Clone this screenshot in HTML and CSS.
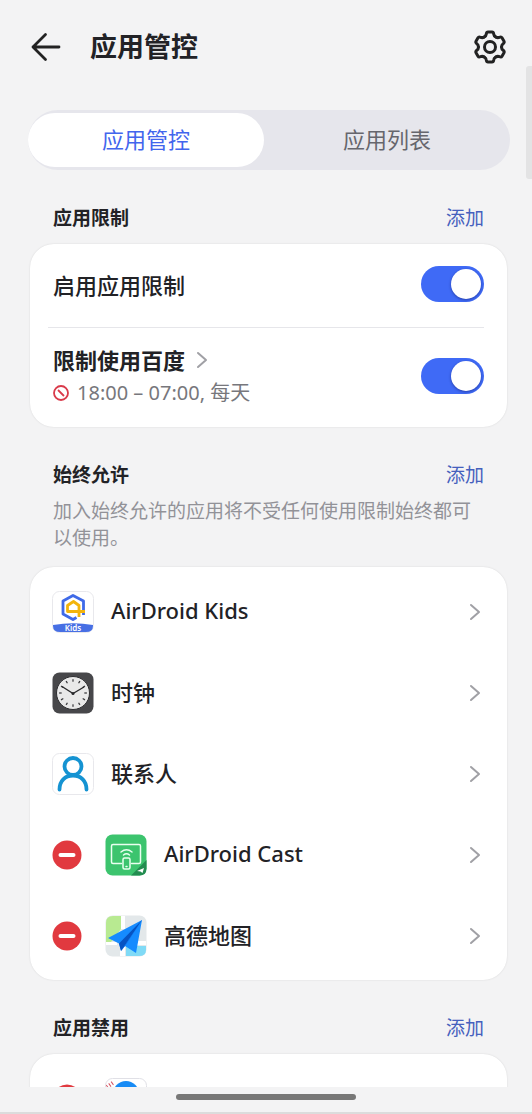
FILE: index.html
```html
<!DOCTYPE html>
<html lang="zh-CN">
<head>
    <meta charset="UTF-8">
    <meta name="viewport" content="width=device-width, initial-scale=1.0">
    <title>应用管控</title>
    <link rel="stylesheet" href="styles.css">
</head>
<body>
    <!-- Shared icons -->
    <svg class="defs" aria-hidden="true">
        <symbol id="chevron" viewBox="0 0 12 18">
            <path d="M2 2l8 7-8 7" fill="none" stroke="currentColor" stroke-width="2" stroke-linecap="round" stroke-linejoin="round"/>
        </symbol>
        <symbol id="minus" viewBox="0 0 30 30">
            <circle cx="15" cy="15" r="14.5" fill="#e1393f"/>
            <path d="M8.5 15h13" stroke="#fff" stroke-width="4" stroke-linecap="round"/>
        </symbol>
        <path id="tooth" d="M-5.8-10Q-3.9-11.1-3.7-13Q-3.4-15-2-15H2Q3.4-15 3.7-13Q3.9-11.1 5.8-10"/>
    </svg>

    <header class="header">
        <button class="icon-button" aria-label="返回">
            <svg width="32" height="30" viewBox="0 0 32 30" fill="none" stroke="#222" stroke-width="2.8" stroke-linecap="round" stroke-linejoin="round">
                <path d="M29 15H3M15.500 2.500L3 15l12.500 12.500"/>
            </svg>
        </button>
        <h1 class="title">应用管控</h1>
        <button class="icon-button" aria-label="设置">
            <svg width="36" height="36" viewBox="-18 -18 36 36" fill="none" stroke="#222" stroke-width="3" stroke-linecap="round">
                <use href="#tooth"/>
                <use href="#tooth" transform="rotate(60)"/>
                <use href="#tooth" transform="rotate(120)"/>
                <use href="#tooth" transform="rotate(180)"/>
                <use href="#tooth" transform="rotate(240)"/>
                <use href="#tooth" transform="rotate(300)"/>
                <circle r="5.500"/>
            </svg>
        </button>
    </header>

    <main class="content">
        <nav class="tabs">
            <button class="tab active">应用管控</button>
            <button class="tab">应用列表</button>
        </nav>

        <!-- App limits -->
        <section class="section">
            <div class="section-head">
                <h2>应用限制</h2>
                <a href="#">添加</a>
            </div>
            <div class="card">
                <div class="limit">
                    <label for="enable-limit">启用应用限制</label>
                    <input type="checkbox" class="switch" id="enable-limit" checked>
                </div>
                <hr class="divider">
                <div class="limit limit-rule">
                    <div>
                        <label class="rule-name" for="limit-baidu">限制使用百度
                            <svg class="chevron"><use href="#chevron"/></svg>
                        </label>
                        <p class="rule-time">
                            <svg width="16" height="16" viewBox="0 0 16 16" fill="none" stroke="#d93a4a" stroke-width="1.8">
                                <circle cx="8" cy="8" r="7"/>
                                <path d="M5 5l6 6"/>
                            </svg>
                            18:00 – 07:00, 每天
                        </p>
                    </div>
                    <input type="checkbox" class="switch" id="limit-baidu" checked>
                </div>
            </div>
        </section>

        <!-- Always allowed -->
        <section class="section">
            <div class="section-head">
                <h2>始终允许</h2>
                <a href="#">添加</a>
            </div>
            <p class="section-note">加入始终允许的应用将不受任何使用限制始终都可以使用。</p>
            <ul class="card app-list">
                <li class="app">
                    <a href="#" class="app-link">
                        <svg class="app-icon" viewBox="0 0 42 42">
                            <rect x=".5" y=".5" width="41" height="41" rx="7" fill="#fff" stroke="#e8e8ec"/>
                            <path d="M1 34Q21 30.500 41 34V35Q41 41 34 41H8Q1 41 1 35Z" fill="#476fe4"/>
                            <path d="M24.500 26.500L21 28.500 11 23V10L21 4.500 31.500 10V24" fill="none" stroke="#3f6ae8" stroke-width="2.800" stroke-linejoin="round"/>
                            <path d="M33 20.500H15.500V14.500L21.500 10.500 27 14.500V26" fill="none" stroke="#f3b40c" stroke-width="2.800" stroke-linejoin="round"/>
                            <text x="21" y="40" class="kids-text">Kids</text>
                        </svg>
                        <span class="app-name">AirDroid Kids</span>
                        <svg class="chevron"><use href="#chevron"/></svg>
                    </a>
                </li>
                <li class="app">
                    <a href="#" class="app-link">
                        <svg class="app-icon" viewBox="0 0 42 42">
                            <rect x=".5" y=".5" width="41" height="41" rx="7" fill="#47474a"/>
                            <circle cx="21" cy="21" r="16.500" fill="#e9e9e9" stroke="#2d2d30" stroke-width="1"/>
                            <!-- hour marks -->
                            <circle cx="21" cy="21" r="12.500" fill="none" stroke="#3b3b3e" stroke-width="2.600" pathLength="120" stroke-dasharray="2 8" stroke-dashoffset="1"/>
                            <path d="M10 14.500L21 21.500 32 15" fill="none" stroke="#29292b" stroke-width="1.400"/>
                            <circle cx="21" cy="21.500" r="1.500" fill="#29292b"/>
                        </svg>
                        <span class="app-name">时钟</span>
                        <svg class="chevron"><use href="#chevron"/></svg>
                    </a>
                </li>
                <li class="app">
                    <a href="#" class="app-link">
                        <svg class="app-icon" viewBox="0 0 42 42">
                            <rect x=".5" y=".5" width="41" height="41" rx="7" fill="#fff" stroke="#e8e8ec"/>
                            <g fill="none" stroke="#1593d2" stroke-width="3.800" stroke-linecap="round">
                                <circle cx="21" cy="13.500" r="8.500"/>
                                <path d="M7.500 36.500C7.500 28 13 22.500 21 22.500S34.500 28 34.500 36.500"/>
                            </g>
                        </svg>
                        <span class="app-name">联系人</span>
                        <svg class="chevron"><use href="#chevron"/></svg>
                    </a>
                </li>
                <li class="app">
                    <button class="remove" aria-label="移除 AirDroid Cast"><svg><use href="#minus"/></svg></button>
                    <a href="#" class="app-link">
                        <svg class="app-icon" viewBox="0 0 42 42">
                            <rect x=".5" y=".5" width="41" height="41" rx="7" fill="#3cc46e"/>
                            <path d="M41.500 26V34.500Q41.500 41.500 34.500 41.500H26Z" fill="#238c50"/>
                            <path d="M32 37l7-3-1.500 5-2-1.500z" fill="#fff"/>
                            <g fill="none" stroke="#e9fff0" stroke-width="1.500" stroke-linecap="round">
                                <path d="M16.500 29.500H8Q6.500 29.500 6.500 28V12Q6.500 10.500 8 10.500H34Q35.500 10.500 35.500 12V28Q35.500 29.500 34 29.500H26.500"/>
                                <rect x="18" y="24" width="7" height="11" rx="1.500"/>
                                <path d="M16 18Q21.500 13.500 27 18M18.500 21Q21.500 18.500 24.500 21M21 32.500h1"/>
                            </g>
                        </svg>
                        <span class="app-name">AirDroid Cast</span>
                        <svg class="chevron"><use href="#chevron"/></svg>
                    </a>
                </li>
                <li class="app">
                    <button class="remove" aria-label="移除高德地图"><svg><use href="#minus"/></svg></button>
                    <a href="#" class="app-link">
                        <svg class="app-icon" viewBox="0 0 42 42">
                            <rect x=".5" y=".5" width="41" height="41" rx="7" fill="#e3e8ea"/>
                            <path d="M1 27V8Q1 1 8 1H16V14L6 27Z" fill="#b8ea91"/>
                            <path d="M16 1h4v13h-4zM1 27h11v3H1zM15 31h5v10h-5zM32 26h9v4H32z" fill="#fff"/>
                            <path d="M21 31H41V35Q41 41 34 41H21Z" fill="#80daf6"/>
                            <path d="M37 5L3 23 14 28.500 16 36 20 31 31 38Z" fill="#158bff"/>
                            <path d="M37 5L14 28.500 16 36Z" fill="#0753c2"/>
                            <path d="M37 5L16 36 20 31Z" fill="#0b6ce2"/>
                        </svg>
                        <span class="app-name">高德地图</span>
                        <svg class="chevron"><use href="#chevron"/></svg>
                    </a>
                </li>
            </ul>
        </section>

        <!-- Disabled apps -->
        <section class="section">
            <div class="section-head">
                <h2>应用禁用</h2>
                <a href="#">添加</a>
            </div>
            <ul class="card app-list">
                <li class="app">
                    <button class="remove" aria-label="移除"><svg><use href="#minus"/></svg></button>
                    <a href="#" class="app-link" aria-label="应用">
                        <svg class="app-icon" viewBox="0 0 42 42">
                            <rect x=".5" y=".5" width="41" height="41" rx="7" fill="#fff" stroke="#e0e0e6"/>
                            <circle cx="21" cy="16" r="13" fill="#178bf5"/>
                            <path d="M2 9L9 4" stroke="#d65766" stroke-width="4" stroke-dasharray="1 2"/>
                        </svg>
                        <span class="app-name"></span>
                        <svg class="chevron"><use href="#chevron"/></svg>
                    </a>
                </li>
            </ul>
        </section>
    </main>

    <footer class="gesture-bar"><span></span></footer>
    <div class="scroll-thumb"></div>
</body>
</html>
```
FILE: styles.css
```css
/* styles.css */

* {
    box-sizing: border-box;
}

body {
    margin: 0;
    height: 100vh;
    display: flex;
    flex-direction: column;
    overflow: hidden;
    position: relative;
    background-color: #f3f3f4;
    color: #222226;
    font-family: 'Noto Sans', 'Noto Sans CJK SC', sans-serif;
    font-size: 22px;
}

h1, h2, p, ul {
    margin: 0;
    padding: 0;
}

a {
    color: inherit;
    text-decoration: none;
}

button {
    border: 0;
    padding: 0;
    background: none;
    font: inherit;
    color: inherit;
    cursor: pointer;
}

svg {
    display: block;
    flex: none;
}

.defs {
    position: absolute;
    width: 0;
    height: 0;
}

/* Header */
.header {
    display: flex;
    align-items: center;
    flex: none;
    height: 94px;
    padding: 0 24px 0 30px;
}

.title {
    flex: 1;
    margin-left: 28px;
    padding-bottom: 3px;
    font-size: 27px;
    font-weight: 600;
}

/* Scrolling content */
.content {
    flex: 1;
    min-height: 0;
    overflow: hidden;
    padding-top: 16px;
}

.tabs {
    display: flex;
    height: 60px;
    margin: 0 22px 0 28px;
    padding: 3px 0;
    border-radius: 30px;
    background-color: #e6e6ec;
}

.tab {
    flex: 51;
    padding-bottom: 4px;
    border-radius: 27px;
    color: #66666d;
}

.tab.active {
    flex: 49;
    background-color: #fff;
    color: #4265ed;
}

.section {
    padding: 0 25px 0 30px;
}

.section-head {
    display: flex;
    justify-content: space-between;
    align-items: flex-end;
    height: 62px;
    padding: 0 23px;
    line-height: 28px;
    font-size: 19px;
}

.section-head h2 {
    font-size: 19px;
    font-weight: 600;
}

.section-head a {
    color: #4560bd;
}

.section-note {
    padding: 9px 23px 3px;
    color: #929298;
    font-size: 19px;
    line-height: 27px;
}

.card {
    margin-top: 12px;
    border-radius: 24px;
    background-color: #fff;
    box-shadow: 0 0 2px rgba(0, 0, 0, 0.12);
}

/* Limits */
.limit {
    display: flex;
    justify-content: space-between;
    align-items: center;
    height: 83px;
    padding: 0 23px 4px;
    font-weight: 500;
}

.limit-rule {
    height: 99px;
}

.divider {
    height: 1px;
    margin: 0 23px 0 18px;
    border: 0;
    background-color: #e6e6ea;
}

.rule-name {
    display: flex;
    align-items: center;
    gap: 11px;
    line-height: 34px;
    font-weight: 600;
}

.rule-time {
    display: flex;
    align-items: center;
    gap: 8px;
    color: #77777c;
    font-size: 20px;
    font-weight: 400;
    line-height: 32px;
}

.switch {
    appearance: none;
    display: flex;
    justify-content: flex-end;
    flex: none;
    width: 63px;
    height: 36px;
    margin: 0;
    padding: 3px;
    border-radius: 18px;
    background-color: #c9c9cf;
    cursor: pointer;
}

.switch:checked {
    background-color: #3f6af6;
}

.switch::before {
    content: '';
    width: 30px;
    height: 30px;
    border-radius: 50%;
    background-color: #fff;
    box-shadow: 0 1px 3px rgba(0, 0, 60, 0.4);
}

/* App lists */
.app-list {
    padding: 4px 0;
    list-style: none;
}

.app {
    display: flex;
    align-items: center;
    gap: 23px;
    height: 81px;
    padding: 0 26px 0 22px;
}

.app-link {
    display: flex;
    align-items: center;
    flex: 1;
    gap: 17px;
}

.app-icon {
    width: 42px;
    height: 42px;
}

.app-name {
    flex: 1;
    padding-bottom: 3px;
    font-weight: 500;
}

.remove svg {
    width: 30px;
    height: 30px;
}

.chevron {
    width: 12px;
    height: 18px;
    color: #a0a0a5;
}

.kids-text {
    fill: #fff;
    font-size: 8px;
    font-weight: 600;
    text-anchor: middle;
}

/* Bottom gesture bar */
.gesture-bar {
    display: flex;
    justify-content: center;
    flex: none;
    height: 27px;
    padding-top: 7px;
    border-bottom: 2px solid #dcdcdc;
}

.gesture-bar span {
    width: 34%;
    height: 6px;
    border-radius: 3px;
    background-color: #777;
}

.scroll-thumb {
    position: absolute;
    top: 66px;
    right: 0;
    width: 6px;
    height: 113px;
    border-radius: 3px 0 0 3px;
    background-color: #e3e3e4;
}
```
